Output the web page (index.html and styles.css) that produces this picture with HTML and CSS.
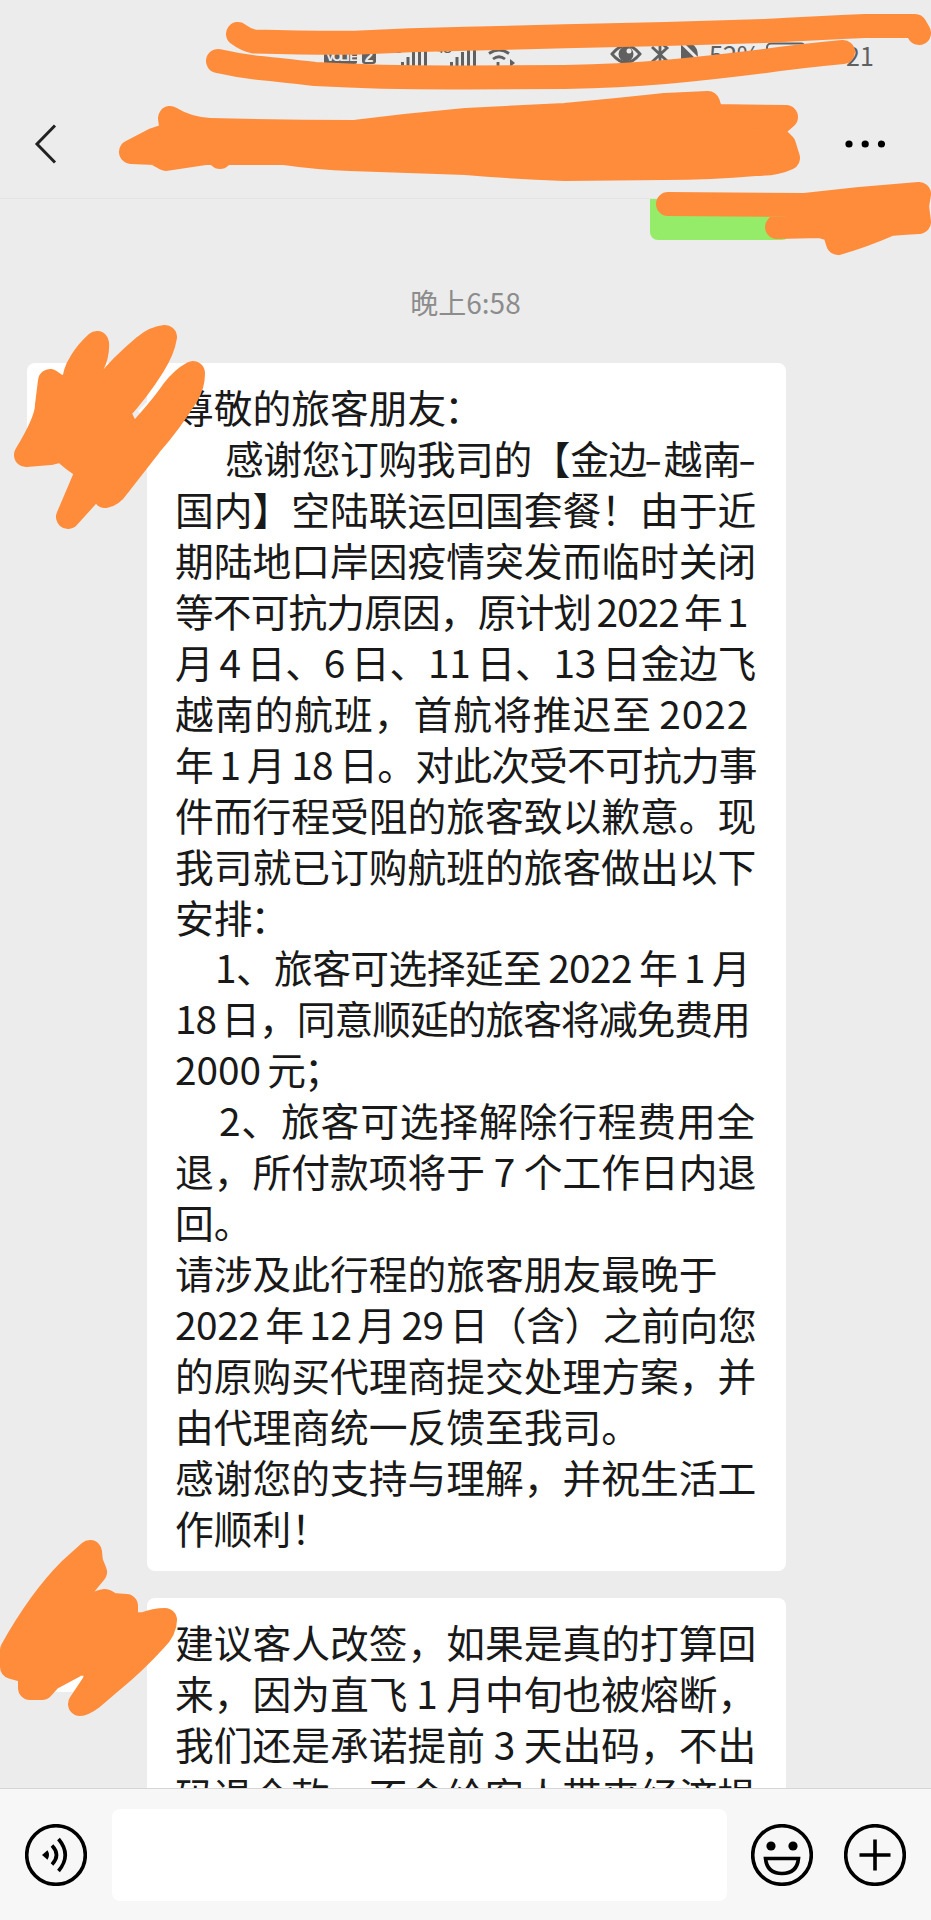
FILE: index.html
```html
<!DOCTYPE html>
<html lang="zh-CN">
<head>
<meta charset="utf-8">
<title>聊天</title>
<link rel="stylesheet" href="styles.css">
</head>
<body>
<div class="screen">
  <header class="header">
    <svg class="status" viewBox="0 0 931 88" width="931" height="88">
      <g fill="#606060">
        <rect x="324" y="44" width="33" height="20" rx="2"/>
        <rect x="362" y="44" width="14" height="20" rx="3"/>
        <path d="M401 62h3v4h-3zM406.500 57h3v9h-3zM412 52h3v14h-3zM418 48h3v18h-3zM424 44h3v22h-3zM450 62h3v4h-3zM455.500 57h3v9h-3zM461 52h3v14h-3zM467 48h3v18h-3zM473 44h3v22h-3z"/>
        <path d="M681 44.500L699 62h-18zM685 44h7q6 3 6 13z"/>
        <circle cx="626" cy="54" r="7.500"/>
        <path d="M510 59l5 4-5 4z"/>
      </g>
      <g fill="none" stroke="#606060" stroke-width="2.800">
        <path d="M489 53.500q10-7 20 0M493 59q6-4.500 12 0M498 62v4"/>
        <path d="M612 54q14-17 28 0q-14 17-28 0z"/>
        <path d="M652 47l15 14-7 6V42l7 6-15 14"/>
        <rect x="767" y="43.500" width="38" height="21" rx="4" stroke-width="2"/>
        <path d="M771 50h26" stroke-width="3"/>
      </g>
      <circle cx="629" cy="51" r="2.500" fill="#ececec"/>
      <text class="badge" x="326" y="61">VOLTE</text>
      <text class="badge two" x="364.500" y="62">2</text>
      <text class="tiny" x="388" y="53">4G</text>
      <text class="tiny" x="437" y="53">4G</text>
      <text class="stat" x="709" y="65">52%</text>
      <text class="clock" x="846" y="65.500">21</text>
    </svg>
    <nav class="nav">
      <svg width="24" height="42" viewBox="0 0 24 42"><path d="M21 2.500L3 21l18 18.500" fill="none" stroke="#222" stroke-width="3"/></svg>
      <svg width="40" height="10" viewBox="0 0 40 10"><circle cx="4" cy="5" r="3.600"/><circle cx="20.200" cy="5" r="3.600"/><circle cx="36.500" cy="5" r="3.600"/></svg>
    </nav>
  </header>

  <main class="chat">
    <div class="sent"></div>
    <div class="time">晚上6:58</div>
    <div class="row">
      <div class="avatar"></div>
      <div class="bubble first">
        <p>尊敬的旅客朋友<span class="pull">：</span></p>
        <p class="in1 t2">感谢您订购我司的【金边<span class="dash">-</span>越南<span class="dash">-</span></p>
        <p>国内】空陆联运回国套餐！由于近</p>
        <p>期陆地口岸因疫情突发而临时关闭</p>
        <p class="t4">等不可抗力原因，原计划 2022 年 1</p>
        <p class="t1">月 4 日、6 日、11 日、13 日金边飞</p>
        <p class="w2">越南的航班，首航将推迟至 2022</p>
        <p class="t7">年 1 月 18 日。对此次受不可抗力事</p>
        <p>件而行程受阻的旅客致以歉意。现</p>
        <p>我司就已订购航班的旅客做出以下</p>
        <p>安排<span class="pull">：</span></p>
        <p class="in2 t5">1、旅客可选择延至 2022 年 1 月</p>
        <p class="t6">18 日，同意顺延的旅客将减免费用</p>
        <p>2000 元<span class="pull">；</span></p>
        <p class="in3 w1">2、旅客可选择解除行程费用全</p>
        <p class="wide">退，所付款项将于 7 个工作日内退</p>
        <p>回。</p>
        <p>请涉及此行程的旅客朋友最晚于</p>
        <p class="t2">2022 年 12 月 29 日（含）之前向您</p>
        <p>的原购买代理商提交处理方案，并</p>
        <p>由代理商统一反馈至我司。</p>
        <p>感谢您的支持与理解，并祝生活工</p>
        <p>作顺利！</p>
      </div>
    </div>
    <div class="row">
      <div class="avatar"></div>
      <div class="bubble">
        <p>建议客人改签，如果是真的打算回</p>
        <p class="wide">来，因为直飞 1 月中旬也被熔断，</p>
        <p class="wide">我们还是承诺提前 3 天出码，不出</p>
        <p>码退全款，不会给客人带来经济损</p>
      </div>
    </div>
  </main>

  <footer class="bar">
    <svg width="62" height="62" viewBox="-31 -31 62 62"><g fill="none" stroke="#000" stroke-width="3.600"><circle r="29.300"/><path d="M-4-9.500Q5 0-4 9.500M2.500-16Q16 0 2.500 16"/></g><path d="M-14 0L-8.500-4.800Q-5.500 0-8.500 4.800z"/></svg>
    <div class="input"></div>
    <svg width="62" height="62" viewBox="-31 -31 62 62"><g fill="none" stroke="#000" stroke-width="3.600"><circle r="29.300"/><path d="M-16.500 3.500h33Q15 18.500 0 18.500T-16.500 3.500z"/></g><circle cx="-11" cy="-9" r="4.600"/><circle cx="11" cy="-9" r="4.600"/></svg>
    <svg width="62" height="62" viewBox="-31 -31 62 62"><g fill="none" stroke="#000" stroke-width="3.600"><circle r="29.300"/><path d="M-15.500 0h31M0-15.500v31"/></g></svg>
  </footer>

  <svg class="marker" width="931" height="1920" viewBox="0 0 931 1920">
    <path class="line" d="M238 34Q246 40 254 41.500Q310 43 355 42.700Q410 40 466 38.800L565 36.300L665 34L765 31Q820 28 865 26L915 26L919 33"/>
    <path class="line" d="M218 61Q240 66 260 68T315 74Q390 78 466 77.500L565 77Q620 76 665 72T765 61Q800 56 843 52"/>
    <path d="M170 118Q188 129 210 130Q280 132 355 132Q410 125 466 120L565 115Q620 110 665 105L708 103L712 116L786 117L770 131L784 145L788 158Q775 164 755 164Q710 168 665 168L565 169Q510 167 466 163L350 159Q320 158 285 153L224 153L220 157L216 153L206 153L166 159L155 153L131 152L154 140L172 134Z"/>
    <path d="M668 204L805 205L860 199L919 194L917 206L919 222Q900 223 890 224Q865 235 838 243L834 230L820 226L777 227L790 212L805 205Z"/>
    <path d="M50 381L60 388L74 384Q74 373 81 362Q87 352 97 343Q98 354 92 366L87 378L107 384Q120 367 145 346Q155 338 165 337Q163 350 153 366Q138 390 118 412L132 440Q160 410 173 391Q182 379 193 373Q193 385 187 395Q170 422 150 445L118 486Q112 495 105 496L96 486L68 517L88 470L74 460L62 450L50 453L26 455Q47 420 47 405Z"/>
    <path d="M90 1552L91 1562L95 1572Q85 1584 72 1600L80 1620Q94 1602 105 1601L112 1605L126 1606L126 1625L145 1624Q155 1620 165 1620Q165 1630 155 1640Q135 1662 113 1680L92 1698Q84 1704 80 1704L94 1683L100 1662L78 1664L50 1679L42 1688L30 1688L30 1672L12 1667L12 1650Q40 1600 70 1570Z"/>
  </svg>
</div>
</body>
</html>
```
FILE: styles.css
```css
* { box-sizing: border-box; }
body { margin: 0; background: #ececec; font-family: "Noto Sans CJK SC", sans-serif; }
.screen { position: relative; width: 931px; height: 1920px; display: flex; flex-direction: column; overflow: hidden; }
.header { height: 199px; flex: none; border-bottom: 1px solid #e4e4e4; }
.status { display: block; }
.badge { font: 700 13px "Liberation Sans", sans-serif; fill: #ececec; letter-spacing: -2.6px; }
.two { font-size: 16px; }
.tiny { font: 700 11px "Liberation Sans", sans-serif; fill: #606060; }
.stat { font: 400 26px "Noto Sans CJK SC", sans-serif; fill: #606060; letter-spacing: -.6px; }
.clock { font: 400 25px "Noto Sans CJK SC", sans-serif; fill: #606060; }
.nav { display: flex; justify-content: space-between; align-items: center; height: 111px; padding: 0 46px 0 34px; }
.chat { flex: 1; min-height: 0; overflow: hidden; }
.sent { width: 140px; height: 41px; margin-left: 650px; background: #95ec69; border-radius: 0 0 8px 8px; }
.time { height: 123px; line-height: 124px; text-align: center; font-size: 28px; color: #8c8c8c; }
.row { display: flex; align-items: flex-start; padding-left: 27px; gap: 32px; margin-bottom: 27px; }
.avatar { width: 88px; height: 94px; background: #fff; border-radius: 8px; flex: none; }
.bubble { width: 639px; padding: 18px 0 18px 28px; background: #fff; border-radius: 8px; position: relative; font-size: 38.75px; line-height: 50.95px; color: #191919; word-spacing: -2.5px; }
.bubble::before { content: ""; position: absolute; left: -9px; top: 38px; border: 10px solid transparent; border-right-color: #fff; border-left: 0; }
.bubble.first { height: 1208px; }
.bubble p { margin: 0; white-space: nowrap; }
.pull { margin-left: -2px; }
.dash { display: inline-block; width: 17px; transform: scaleX(1.35); }
.bubble .in1 { padding-left: 50px; }
.bubble .in2 { padding-left: 40px; }
.bubble .in3 { padding-left: 44px; }
.t1 { letter-spacing: -.23px; }
.t2 { letter-spacing: -.4px; }
.t4 { letter-spacing: -.92px; }
.t5 { letter-spacing: -.6px; word-spacing: -1px; }
.t6 { letter-spacing: -1px; }
.t7 { letter-spacing: -.8px; word-spacing: -1.3px; }
.w1 { letter-spacing: .85px; }
.w2 { letter-spacing: 1px; }
.wide { word-spacing: 0; }
.bar { height: 132px; flex: none; background: #f7f7f7; border-top: 1px solid #d6d6d6; display: flex; align-items: center; padding: 0 25px; }
.input { width: 615px; height: 92px; margin: 0 24px 0 25px; background: #fff; border-radius: 8px; }
.bar svg:last-child { margin-left: 31px; }
.marker { position: absolute; left: 0; top: 0; pointer-events: none; }
.marker path { fill: #ff8c3b; stroke: #ff8c3b; stroke-width: 24; stroke-linejoin: round; stroke-linecap: round; }
.marker .line { fill: none; }
```
